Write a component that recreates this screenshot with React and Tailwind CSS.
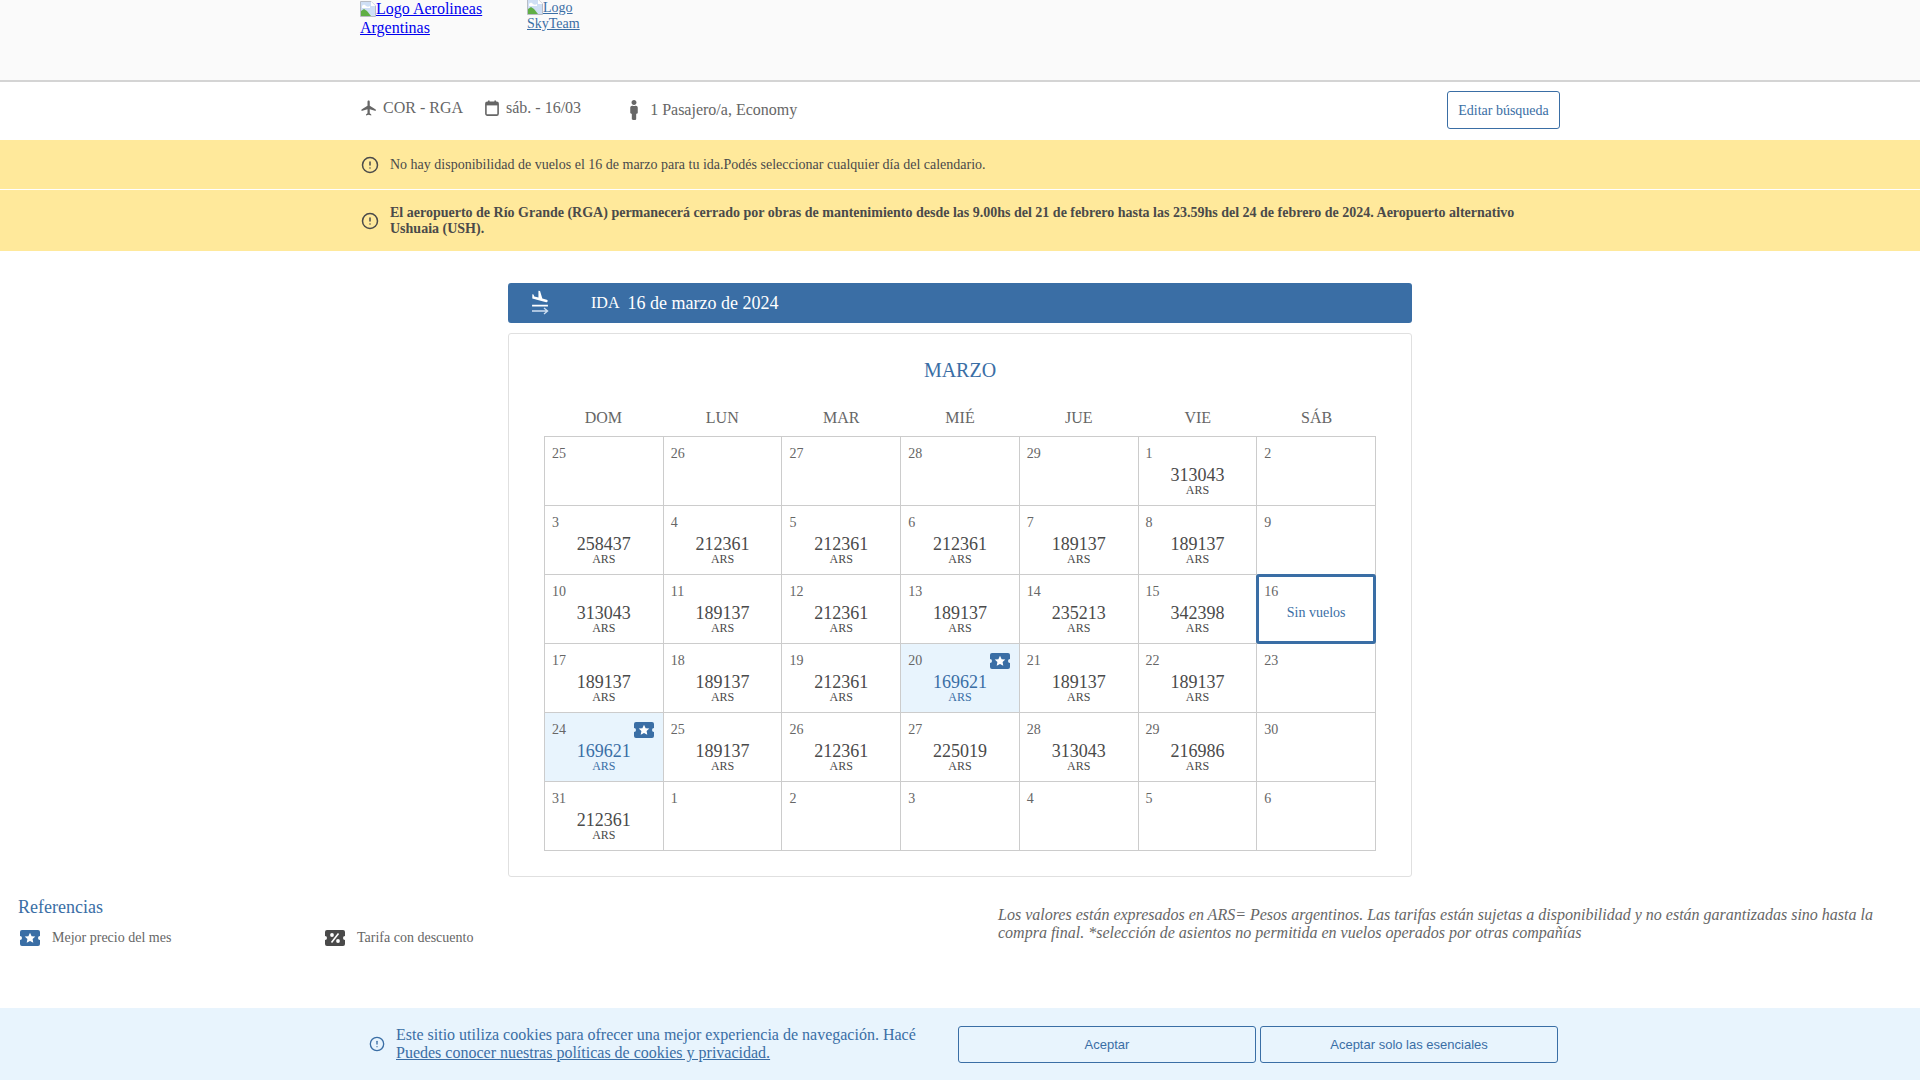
import React from 'react';
import { CircleAlert } from 'lucide-react';
import { MdFlight, MdFlightLand } from 'react-icons/md';
import { FaMale } from 'react-icons/fa';
import clsx from 'clsx';

const WEEK_DAYS = ['DOM', 'LUN', 'MAR', 'MIÉ', 'JUE', 'VIE', 'SÁB'];

const DAYS = [
  { d: 25 }, { d: 26 }, { d: 27 }, { d: 28 }, { d: 29 }, { d: 1, p: 313043 }, { d: 2 },
  { d: 3, p: 258437 }, { d: 4, p: 212361 }, { d: 5, p: 212361 }, { d: 6, p: 212361 }, { d: 7, p: 189137 }, { d: 8, p: 189137 }, { d: 9 },
  { d: 10, p: 313043 }, { d: 11, p: 189137 }, { d: 12, p: 212361 }, { d: 13, p: 189137 }, { d: 14, p: 235213 }, { d: 15, p: 342398 }, { d: 16, selected: true },
  { d: 17, p: 189137 }, { d: 18, p: 189137 }, { d: 19, p: 212361 }, { d: 20, p: 169621, best: true }, { d: 21, p: 189137 }, { d: 22, p: 189137 }, { d: 23 },
  { d: 24, p: 169621, best: true }, { d: 25, p: 189137 }, { d: 26, p: 212361 }, { d: 27, p: 225019 }, { d: 28, p: 313043 }, { d: 29, p: 216986 }, { d: 30 },
  { d: 31, p: 212361 }, { d: 1 }, { d: 2 }, { d: 3 }, { d: 4 }, { d: 5 }, { d: 6 },
];

const TICKET = 'M2 0h16a2 2 0 0 1 2 2v4a2 2 0 0 0 0 4v4a2 2 0 0 1-2 2H2a2 2 0 0 1-2-2v-4a2 2 0 0 0 0-4V2a2 2 0 0 1 2-2z';

const StarTicket = () => (
  <svg width="20" height="16" viewBox="0 0 20 16" className="block">
    <path d={TICKET} fill="#3a6ea5" />
    <path d="M10 2.8l1.6 3.4 3.7.4-2.7 2.5.7 3.7-3.3-1.8-3.3 1.8.7-3.7-2.7-2.5 3.7-.4z" fill="#fff" />
  </svg>
);

const PercentTicket = () => (
  <svg width="20" height="16" viewBox="0 0 20 16" className="block">
    <path d={TICKET} fill="#4a4a4a" />
    <circle cx="7" cy="5" r="1.9" fill="#fff" />
    <circle cx="13" cy="11" r="1.9" fill="#fff" />
    <path d="M13.5 3.5l-7 9" stroke="#fff" strokeWidth="1.6" />
  </svg>
);

const BrokenImage = () => (
  <svg width="16" height="16" viewBox="0 0 16 16" className="inline-block align-[-3px]">
    <path d="M0.5 0.5h10.5l4.5 4.5v10.5H0.5z" fill="#cfdff5" stroke="#b8bcc4" strokeWidth="1" />
    <path d="M2 5c1.5-2 3-1 4 0s3 1 4 0v2H2z" fill="#fff" />
    <path d="M1 15V10l3-2 3 2 4 5z" fill="#5fae45" />
    <path d="M15.5 5H11V0.5z" fill="#fff" />
  </svg>
);

const CalendarIcon = () => (
  <svg width="14" height="16" viewBox="0 0 14 16" className="block">
    <rect x="0.9" y="2.4" width="12.2" height="12.7" rx="1.4" fill="none" stroke="#666" strokeWidth="1.6" />
    <rect x="0.9" y="2.4" width="12.2" height="3" fill="#666" />
    <rect x="3" y="0.5" width="1.6" height="3" fill="#666" />
    <rect x="9.4" y="0.5" width="1.6" height="3" fill="#666" />
  </svg>
);

const FlightIcon = () => (
  <div className="w-[20px] h-[20px] relative">
    <MdFlightLand className="absolute -top-[4px] left-0 w-[20px] h-[20px] text-white" />
    <svg width="20" height="22" viewBox="0 0 20 22" className="absolute top-0 left-0">
      <path d="M2 18h15.5M14 15l3.6 3-3.6 3" fill="none" stroke="#cfe0f2" strokeWidth="1.3" />
    </svg>
  </div>
);

const DayCell = ({ day }) => (
  <div
    className={clsx(
      'relative h-[69px] border-r border-b border-[#ccc] text-center',
      day.best && 'bg-[#e8f4fd] text-[#3a6ea5]',
      !day.best && 'text-[#4a4a4a]'
    )}
  >
    {day.selected && (
      <div className="absolute -top-px -left-px -right-px -bottom-px border-[3px] border-[#3a6ea5] rounded-[3px]" />
    )}
    <div className="text-left pl-[7px] pt-[9px] text-[14px] leading-[16px] text-[#666]">{day.d}</div>
    {day.p && (
      <>
        <div className="text-[18px] leading-[20px] mt-[3px]">{day.p}</div>
        <div className="text-[12px] leading-[10px]">ARS</div>
      </>
    )}
    {day.selected && <div className="text-[14px] leading-[16px] mt-[5px] text-[#3a6ea5]">Sin vuelos</div>}
    {day.best && (
      <div className="absolute top-[9px] right-[9px]">
        <StarTicket />
      </div>
    )}
  </div>
);

export default function App() {
  return (
    <div className="min-h-screen bg-white font-['Liberation_Serif',serif] text-[#4a4a4a]">
      {/* Header */}
      <div className="h-[82px] bg-[#fafafa] border-b-2 border-[#d4d4d4]">
        <div className="w-[1200px] mx-auto flex items-start">
          <a href="#" className="block w-[130px] -mt-[1px] text-[16px] leading-[19px] text-[#0000ee] underline">
            <BrokenImage />Logo Aerolineas Argentinas
          </a>
          <a href="#" className="block w-[60px] ml-[37px] -mt-[1px] text-[14px] leading-[16px] text-[#3a6ea5] underline">
            <BrokenImage />Logo SkyTeam
          </a>
        </div>
      </div>

      {/* Search summary */}
      <div className="h-[58px] w-[1200px] mx-auto pb-[2px] flex items-center text-[#666]">
        <div className="flex items-center mb-[4px]">
          <MdFlight className="w-[18px] h-[18px] text-[#666]" />
          <span className="ml-[5px] text-[16px]">COR - RGA</span>
        </div>
        <div className="flex items-center ml-[22px] mb-[4px]">
          <CalendarIcon />
          <span className="ml-[7px] text-[16px]">sáb. - 16/03</span>
        </div>
        <div className="flex items-center ml-[43px]">
          <FaMale className="w-[20px] h-[20px] text-[#666]" />
          <span className="ml-[6px] text-[16px]">1 Pasajero/a, Economy</span>
        </div>
        <button className="ml-auto w-[113px] h-[38px] border border-[#3a6ea5] rounded-[3px] text-[14px] text-[#3a6ea5]">
          Editar búsqueda
        </button>
      </div>

      {/* Alerts */}
      <div className="bg-[#ffe99b] h-[50px] border-b border-white">
        <div className="w-[1200px] mx-auto h-full flex items-center">
          <CircleAlert className="w-[18px] h-[18px] ml-[1px] text-[#4a4a4a]" />
          <span className="ml-[11px] text-[14px]">
            No hay disponibilidad de vuelos el 16 de marzo para tu ida.Podés seleccionar cualquier día del calendario.
          </span>
        </div>
      </div>
      <div className="bg-[#ffe99b] h-[61px]">
        <div className="w-[1200px] mx-auto h-full flex items-center">
          <CircleAlert className="w-[18px] h-[18px] ml-[1px] shrink-0 text-[#4a4a4a]" />
          <span className="ml-[11px] w-[1130px] text-[14px] leading-[16px] font-bold">
            El aeropuerto de Río Grande (RGA) permanecerá cerrado por obras de mantenimiento desde las 9.00hs del 21 de febrero hasta las 23.59hs del 24 de febrero de 2024. Aeropuerto alternativo Ushuaia (USH).
          </span>
        </div>
      </div>

      {/* Calendar */}
      <div className="w-[904px] mx-auto mt-[32px]">
        <div className="h-[40px] bg-[#3a6ea5] rounded-[3px] flex items-center text-white pl-[22px]">
          <FlightIcon />
          <span className="ml-[41px] text-[16px]">IDA</span>
          <span className="ml-[8px] text-[18px]">16 de marzo de 2024</span>
        </div>
        <div className="mt-[10px] h-[544px] border border-[#e0e0e0] rounded-[3px] px-[35px] pt-[23px]">
          <div className="text-center text-[20px] leading-[26px] text-[#3a6ea5]">MARZO</div>
          <div className="grid grid-cols-7 mt-[25px] w-[832px]">
            {WEEK_DAYS.map((name) => (
              <div key={name} className="text-center text-[16px] leading-[20px] h-[28px] text-[#666]">
                {name}
              </div>
            ))}
          </div>
          <div className="grid grid-cols-7 w-[832px] border-t border-l border-[#ccc]">
            {DAYS.map((day, i) => (
              <DayCell key={i} day={day} />
            ))}
          </div>
        </div>
      </div>

      {/* References */}
      <div className="flex mt-[19px] pl-[18px]">
        <div className="w-[980px]">
          <div className="text-[18px] leading-[22px] text-[#3a6ea5]">Referencias</div>
          <div className="flex mt-[9px] ml-[2px]">
            <div className="w-[305px] flex items-center">
              <StarTicket />
              <span className="ml-[12px] text-[14px] text-[#666]">Mejor precio del mes</span>
            </div>
            <div className="flex items-center">
              <PercentTicket />
              <span className="ml-[12px] text-[14px] text-[#666]">Tarifa con descuento</span>
            </div>
          </div>
        </div>
        <p className="w-[885px] mt-[10px] text-[16px] leading-[18px] italic text-[#666]">
          Los valores están expresados en ARS= Pesos argentinos. Las tarifas están sujetas a disponibilidad y no están garantizadas sino hasta la compra final. *selección de asientos no permitida en vuelos operados por otras compañías
        </p>
      </div>

      {/* Cookie banner */}
      <div className="fixed bottom-0 inset-x-0 h-[72px] bg-[#e8f4fd]">
        <div className="w-[1200px] mx-auto h-full flex items-center text-[#3a6ea5]">
          <CircleAlert className="w-[16px] h-[16px] ml-[9px] shrink-0" />
          <div className="ml-[11px] w-[562px] text-[16px] leading-[18px]">
            <div>Este sitio utiliza cookies para ofrecer una mejor experiencia de navegación. Hacé</div>
            <a href="#" className="underline">Puedes conocer nuestras políticas de cookies y privacidad.</a>
          </div>
          <button className="w-[298px] h-[37px] mt-[1px] border border-[#3a6ea5] rounded-[3px] font-['Liberation_Sans',sans-serif] text-[13px]">
            Aceptar
          </button>
          <button className="ml-[4px] w-[298px] h-[37px] mt-[1px] border border-[#3a6ea5] rounded-[3px] font-['Liberation_Sans',sans-serif] text-[13px]">
            Aceptar solo las esenciales
          </button>
        </div>
      </div>
    </div>
  );
}
